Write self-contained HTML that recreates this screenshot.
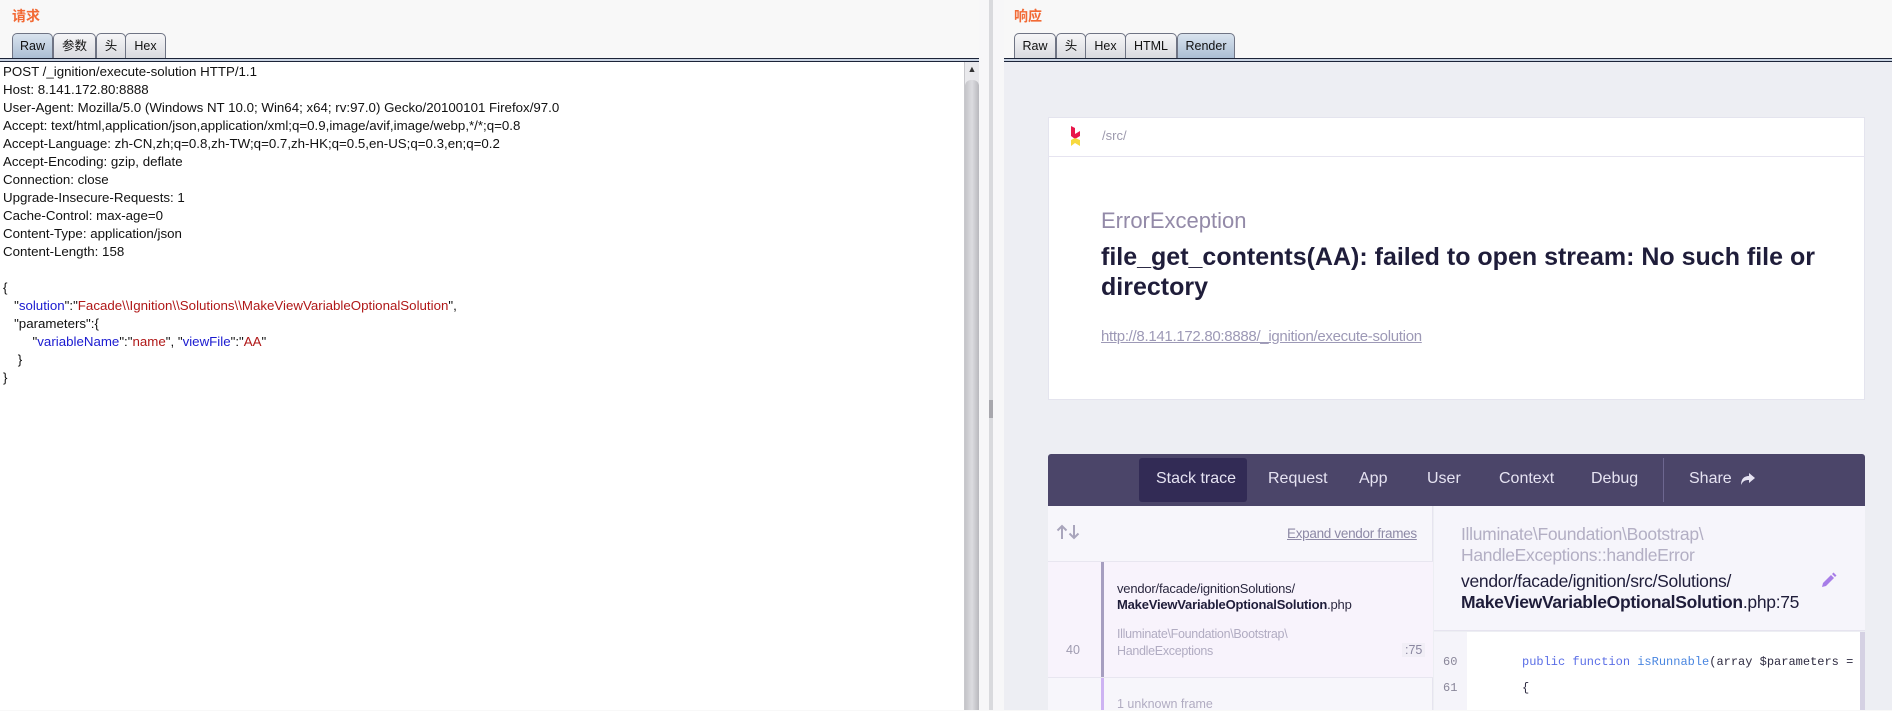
<!DOCTYPE html>
<html><head><meta charset="utf-8"><style>
*{margin:0;padding:0;box-sizing:border-box}
body{width:1892px;height:710px;overflow:hidden;position:relative;background:#f8f8f8;font-family:"Liberation Sans","Noto Sans CJK SC",sans-serif}
.abs{position:absolute}
.ttl{color:#f26a35;font-weight:bold;font-size:14px;top:6px}
.tab{position:absolute;top:33px;height:26px;border:1px solid #6f7484;border-bottom:none;border-radius:5px 5px 0 0;background:linear-gradient(#f6f6f8,#d8d9de);font-size:12.5px;color:#111;text-align:center;line-height:24px}
.tab.sel{background:linear-gradient(#d9e3ee,#a9bdd3)}
.rule{position:absolute;top:58px;height:4px;border-top:1px solid #1c2438;border-bottom:1px solid #1c2438;background:#c9d3e2}
.req{position:absolute;left:0;top:62px;width:964px;height:648px;background:#fff;font-size:13.3px;color:#111;line-height:18px;padding:1px 0 0 3px;white-space:pre}
.k{color:#1a1ad0}.s{color:#b01818}
.muted{color:#a6a2ba}
</style></head><body>
<!-- left pane -->
<div class="abs ttl" style="left:12px">请求</div>
<div class="tab sel" style="left:12px;width:41px">Raw</div>
<div class="tab" style="left:53px;width:43px">参数</div>
<div class="tab" style="left:96px;width:30px">头</div>
<div class="tab" style="left:125px;width:41px">Hex</div>
<div class="rule" style="left:0;width:979px"></div>
<div class="req">POST /_ignition/execute-solution HTTP/1.1
Host: 8.141.172.80:8888
User-Agent: Mozilla/5.0 (Windows NT 10.0; Win64; x64; rv:97.0) Gecko/20100101 Firefox/97.0
Accept: text/html,application/json,application/xml;q=0.9,image/avif,image/webp,*/*;q=0.8
Accept-Language: zh-CN,zh;q=0.8,zh-TW;q=0.7,zh-HK;q=0.5,en-US;q=0.3,en;q=0.2
Accept-Encoding: gzip, deflate
Connection: close
Upgrade-Insecure-Requests: 1
Cache-Control: max-age=0
Content-Type: application/json
Content-Length: 158

{
   "<span class="k">solution</span>":"<span class="s">Facade\\Ignition\\Solutions\\MakeViewVariableOptionalSolution</span>",
   "parameters":{
        "<span class="k">variableName</span>":"<span class="s">name</span>", "<span class="k">viewFile</span>":"<span class="s">AA</span>"
    }
}</div>
<!-- scrollbar -->
<div class="abs" style="left:964px;top:62px;width:15px;height:648px;background:#e9e9ec;border-left:1px solid #c8c8cc"></div>
<div class="abs" style="left:966px;top:64px;width:12px;height:14px;font-size:9px;text-align:center;color:#333">▲</div>
<div class="abs" style="left:965px;top:80px;width:14px;height:630px;border-radius:6px 6px 0 0;background:linear-gradient(90deg,#c4c4c8,#dcdce0 50%,#b8b8bd)"></div>
<!-- divider -->
<div class="abs" style="left:979px;top:0;width:25px;height:710px;background:#f7f7f8"></div>
<div class="abs" style="left:989px;top:0;width:4px;height:710px;background:#d9dadd"></div>
<div class="abs" style="left:989px;top:400px;width:4px;height:18px;background:#a8a8ad"></div>
<!-- right pane -->
<div class="abs ttl" style="left:1014px">响应</div>
<div class="tab" style="left:1014px;width:42px">Raw</div>
<div class="tab" style="left:1056px;width:30px">头</div>
<div class="tab" style="left:1085px;width:41px">Hex</div>
<div class="tab" style="left:1125px;width:52px">HTML</div>
<div class="tab sel" style="left:1177px;width:58px">Render</div>
<div class="rule" style="left:1004px;width:888px"></div>
<div class="abs" style="left:1004px;top:62px;width:888px;height:648px;background:#edeef3"></div>
<!-- card 1 -->
<div class="abs" style="left:1048px;top:117px;width:817px;height:283px;background:#fff;border:1px solid #e4e4ee"></div>
<div class="abs" style="left:1048px;top:156px;width:817px;height:1px;background:#e6e4f0"></div>
<svg class="abs" style="left:1070px;top:125px" width="12" height="22" viewBox="0 0 12 22"><path d="M1 1 L5 3 V9 L10 6 V11 L5 14 L1 11Z" fill="#e8174a"/><path d="M1 15 L5 13 L10 15 V21 L5 18 L1 21Z" fill="#f7d93e"/></svg>
<div class="abs muted" style="left:1102px;top:128px;font-size:13px;color:#9c99ad">/src/</div>
<div class="abs" style="left:1101px;top:208px;font-size:22px;color:#938aa8">ErrorException</div>
<div class="abs" style="left:1101px;top:242px;font-size:25px;line-height:30px;color:#1f1d3a;font-weight:600;letter-spacing:0px">file_get_contents(AA): failed to open stream: No such file or<br>directory</div>
<div class="abs" style="left:1101px;top:328px;font-size:15px;color:#9d99b6;text-decoration:underline;letter-spacing:-0.3px">http://8.141.172.80:8888/_ignition/execute-solution</div>
<!-- card 2 -->
<div class="abs" style="left:1048px;top:454px;width:817px;height:52px;background:#4b4569;border-radius:3px 3px 0 0"></div>
<div class="abs" style="left:1139px;top:458px;width:108px;height:44px;background:#322b55;border-radius:3px"></div>
<div class="abs" style="top:470px;left:1048px;width:817px;font-size:16px;color:#e6e3f2">
<span class="abs" style="left:108px;white-space:nowrap">Stack trace</span>
<span class="abs" style="left:220px">Request</span>
<span class="abs" style="left:311px">App</span>
<span class="abs" style="left:379px">User</span>
<span class="abs" style="left:451px">Context</span>
<span class="abs" style="left:543px">Debug</span>
<span class="abs" style="left:641px">Share</span>
</div>
<div class="abs" style="left:1663px;top:458px;width:1px;height:44px;background:#6d6790"></div>
<svg class="abs" style="left:1740px;top:472px" width="16" height="14" viewBox="0 0 16 14"><path d="M9 1 L15 6 L9 11 V8 C5 8 3 9 1 13 C1 7 4 4 9 4Z" fill="#e6e3f2"/></svg>
<!-- left col -->
<div class="abs" style="left:1048px;top:506px;width:385px;height:204px;background:#f7f6fb;border-right:1px solid #e6e4ef"></div>
<div class="abs" style="left:1048px;top:561px;width:385px;height:1px;background:#e8e6f0"></div>
<svg class="abs" style="left:1056px;top:524px" width="24" height="16" viewBox="0 0 24 16" fill="none" stroke="#a9a5bc" stroke-width="2"><path d="M6 15 V2 M1.5 6.5 L6 2 L10.5 6.5"/><path d="M18 1 V14 M13.5 9.5 L18 14 L22.5 9.5"/></svg>
<div class="abs" style="left:1287px;top:526px;font-size:13.5px;color:#8d89a6;text-decoration:underline;letter-spacing:-0.3px">Expand vendor frames</div>
<div class="abs" style="left:1048px;top:562px;width:385px;height:115px;background:#f8f3fc"></div>
<div class="abs" style="left:1101px;top:562px;width:3px;height:115px;background:#a69ec0"></div>
<div class="abs" style="left:1048px;top:677px;width:385px;height:1px;background:#e8e6f0"></div>
<div class="abs" style="left:1101px;top:678px;width:3px;height:32px;background:#cdb3f2"></div>
<div class="abs" style="left:1066px;top:643px;font-size:12.5px;color:#9f9bb0">40</div>
<div class="abs" style="left:1117px;top:581px;font-size:13px;line-height:16px;color:#2b2840;letter-spacing:-0.2px">vendor/facade/ignitionSolutions/<br><span style="font-weight:600;color:#1f1d3a">MakeViewVariableOptionalSolution</span>.php</div>
<div class="abs" style="left:1117px;top:626px;font-size:12.5px;line-height:17px;color:#b1acc2;letter-spacing:-0.3px">Illuminate\Foundation\Bootstrap\<br>HandleExceptions</div>
<div class="abs" style="left:1402px;top:643px;font-size:12.5px;color:#8a86a0;background:#f1eef6;padding:0 3px">:75</div>
<div class="abs" style="left:1117px;top:697px;font-size:12.5px;color:#b1acc2">1 unknown frame</div>
<!-- right detail -->
<div class="abs" style="left:1434px;top:506px;width:431px;height:125px;background:#f6f5fb;border-bottom:1px solid #e6e4ef"></div>
<div class="abs" style="left:1461px;top:524px;font-size:17.5px;line-height:21px;color:#b3afc4;letter-spacing:-0.3px">Illuminate\Foundation\Bootstrap\<br>HandleExceptions::handleError</div>
<div class="abs" style="left:1461px;top:571px;font-size:17.5px;line-height:21px;color:#1f1d3a;letter-spacing:-0.3px">vendor/facade/ignition/src/Solutions/<br><b style="font-weight:600">MakeViewVariableOptionalSolution</b>.php:75</div>
<svg class="abs" style="left:1821px;top:572px" width="16" height="16" viewBox="0 0 16 16"><path d="M2 11 L10 3 L13 6 L5 14 L1 15Z" fill="#a77de8"/><path d="M11 2 L12.5 0.5 L15.5 3.5 L14 5Z" fill="#a77de8"/></svg>
<div class="abs" style="left:1434px;top:632px;width:33px;height:78px;background:#f5f4fa"></div>
<div class="abs" style="left:1467px;top:632px;width:393px;height:78px;background:#fff"></div>
<div class="abs" style="left:1860px;top:632px;width:5px;height:78px;background:#d5d1e3"></div>
<div class="abs" style="left:1443px;top:649px;font-family:'Liberation Mono',monospace;font-size:12px;line-height:26px;color:#8a879a">60<br>61</div>
<div class="abs" style="left:1522px;top:649px;font-family:'Liberation Mono',monospace;font-size:12px;line-height:26px;color:#2d2a40;white-space:pre"><span style="color:#5a6ee6">public function</span> <span style="color:#4a86e0">isRunnable</span>(array $parameters =
{</div>
</body></html>
